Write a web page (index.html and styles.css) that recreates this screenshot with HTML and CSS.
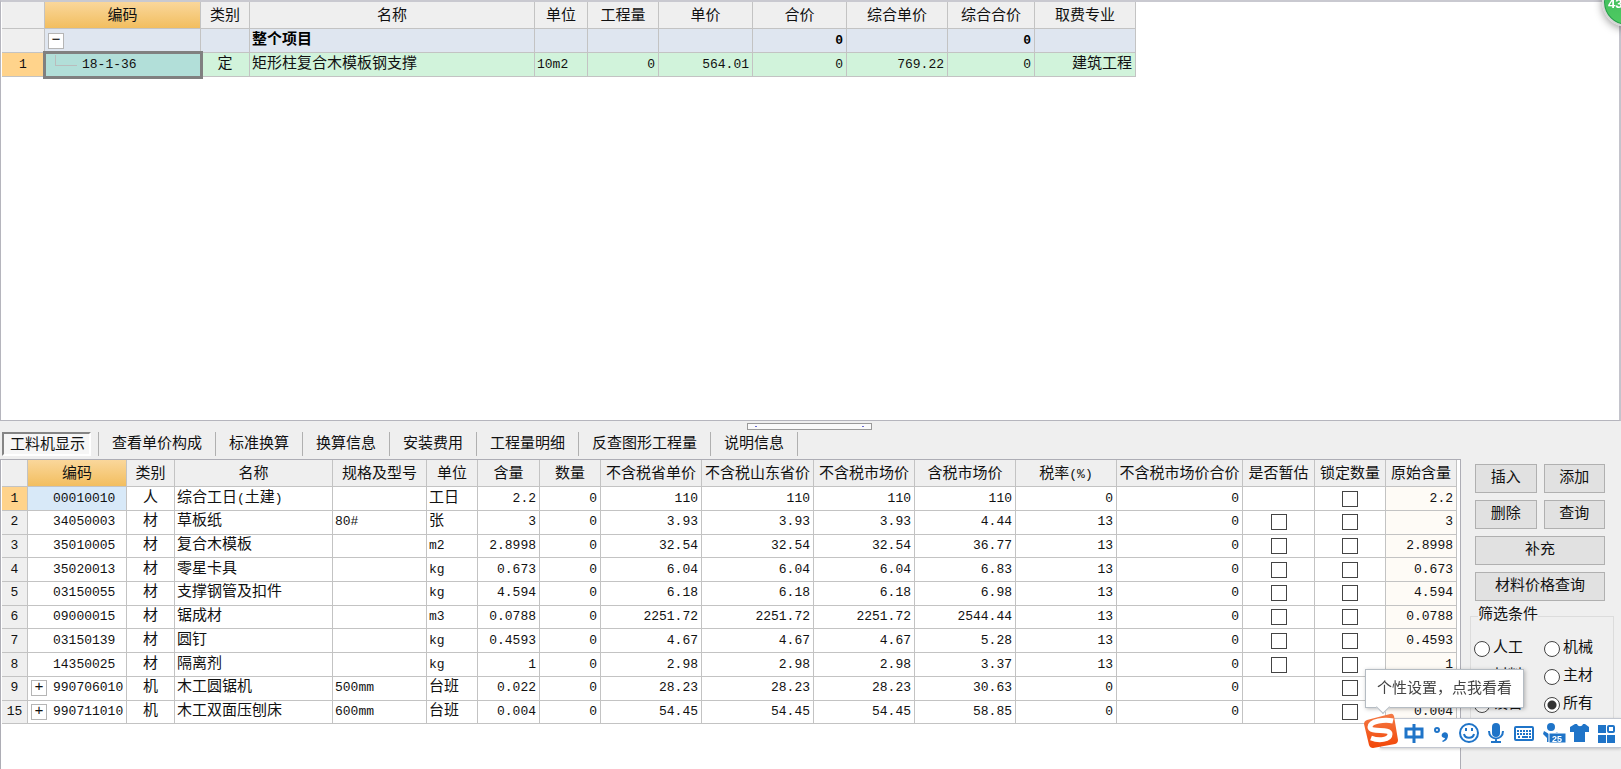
FILE: index.html
```
<!DOCTYPE html>
<html lang="zh-CN">
<head>
<meta charset="utf-8">
<title>工料机显示</title>
<link rel="stylesheet" href="styles.css">
</head>
<body>
<main class="app">
<section class="project">
<table class="grid project-grid">
<colgroup><col class="w43"><col class="w156"><col class="w49"><col class="w285"><col class="w53"><col class="w71"><col class="w94"><col class="w94"><col class="w101"><col class="w87"><col class="w101"></colgroup>
<thead><tr><th></th><th class="key">编码</th><th>类别</th><th>名称</th><th>单位</th><th>工程量</th><th>单价</th><th>合价</th><th>综合单价</th><th>综合合价</th><th>取费专业</th></tr></thead>
<tbody>
<tr class="total"><th></th><td class="toggle"><button class="expander" aria-label="折叠">−</button></td><td></td><td>整个项目</td><td></td><td></td><td></td><td class="num">0</td><td></td><td class="num">0</td><td></td></tr>
<tr class="item"><th class="current">1</th><td class="selected">18-1-36</td><td class="mid">定</td><td>矩形柱复合木模板钢支撑</td><td class="lat">10m2</td><td class="num">0</td><td class="num">564.01</td><td class="num">0</td><td class="num">769.22</td><td class="num">0</td><td class="end">建筑工程</td></tr>
</tbody>
</table>
</section>

<section class="detail">
<div class="splitter" role="separator"></div>
<nav class="tabs">
<button class="tab active">工料机显示</button>
<button class="tab">查看单价构成</button>
<button class="tab">标准换算</button>
<button class="tab">换算信息</button>
<button class="tab">安装费用</button>
<button class="tab">工程量明细</button>
<button class="tab">反查图形工程量</button>
<button class="tab">说明信息</button>
</nav>
<div class="work">
<div class="resources">
<table class="grid resource-grid">
<colgroup><col class="w26"><col class="w99"><col class="w48"><col class="w158"><col class="w94"><col class="w51"><col class="w62"><col class="w61"><col class="w101"><col class="w112"><col class="w101"><col class="w101"><col class="w101"><col class="w126"><col class="w72"><col class="w71"><col class="w71"></colgroup>
<thead><tr><th></th><th class="key">编码</th><th>类别</th><th>名称</th><th>规格及型号</th><th>单位</th><th>含量</th><th>数量</th><th>不含税省单价</th><th>不含税山东省价</th><th>不含税市场价</th><th>含税市场价</th><th>税率<span class="small">(%)</span></th><th>不含税市场价合价</th><th>是否暂估</th><th>锁定数量</th><th>原始含量</th></tr></thead>
<tbody>
<tr><th class="current">1</th><td class="code focus">00010010</td><td class="mid">人</td><td>综合工日<span class="small">(</span>土建<span class="small">)</span></td><td></td><td>工日</td><td class="num">2.2</td><td class="num">0</td><td class="num">110</td><td class="num">110</td><td class="num">110</td><td class="num">110</td><td class="num">0</td><td class="num">0</td><td></td><td class="mid"><input type="checkbox" aria-label="锁定数量"></td><td class="num origin">2.2</td></tr>
<tr><th>2</th><td class="code">34050003</td><td class="mid">材</td><td>草板纸</td><td class="lat">80#</td><td>张</td><td class="num">3</td><td class="num">0</td><td class="num">3.93</td><td class="num">3.93</td><td class="num">3.93</td><td class="num">4.44</td><td class="num">13</td><td class="num">0</td><td class="mid"><input type="checkbox" aria-label="是否暂估"></td><td class="mid"><input type="checkbox" aria-label="锁定数量"></td><td class="num origin">3</td></tr>
<tr><th>3</th><td class="code">35010005</td><td class="mid">材</td><td>复合木模板</td><td></td><td class="lat">m2</td><td class="num">2.8998</td><td class="num">0</td><td class="num">32.54</td><td class="num">32.54</td><td class="num">32.54</td><td class="num">36.77</td><td class="num">13</td><td class="num">0</td><td class="mid"><input type="checkbox" aria-label="是否暂估"></td><td class="mid"><input type="checkbox" aria-label="锁定数量"></td><td class="num origin">2.8998</td></tr>
<tr><th>4</th><td class="code">35020013</td><td class="mid">材</td><td>零星卡具</td><td></td><td class="lat">kg</td><td class="num">0.673</td><td class="num">0</td><td class="num">6.04</td><td class="num">6.04</td><td class="num">6.04</td><td class="num">6.83</td><td class="num">13</td><td class="num">0</td><td class="mid"><input type="checkbox" aria-label="是否暂估"></td><td class="mid"><input type="checkbox" aria-label="锁定数量"></td><td class="num origin">0.673</td></tr>
<tr><th>5</th><td class="code">03150055</td><td class="mid">材</td><td>支撑钢管及扣件</td><td></td><td class="lat">kg</td><td class="num">4.594</td><td class="num">0</td><td class="num">6.18</td><td class="num">6.18</td><td class="num">6.18</td><td class="num">6.98</td><td class="num">13</td><td class="num">0</td><td class="mid"><input type="checkbox" aria-label="是否暂估"></td><td class="mid"><input type="checkbox" aria-label="锁定数量"></td><td class="num origin">4.594</td></tr>
<tr><th>6</th><td class="code">09000015</td><td class="mid">材</td><td>锯成材</td><td></td><td class="lat">m3</td><td class="num">0.0788</td><td class="num">0</td><td class="num">2251.72</td><td class="num">2251.72</td><td class="num">2251.72</td><td class="num">2544.44</td><td class="num">13</td><td class="num">0</td><td class="mid"><input type="checkbox" aria-label="是否暂估"></td><td class="mid"><input type="checkbox" aria-label="锁定数量"></td><td class="num origin">0.0788</td></tr>
<tr><th>7</th><td class="code">03150139</td><td class="mid">材</td><td>圆钉</td><td></td><td class="lat">kg</td><td class="num">0.4593</td><td class="num">0</td><td class="num">4.67</td><td class="num">4.67</td><td class="num">4.67</td><td class="num">5.28</td><td class="num">13</td><td class="num">0</td><td class="mid"><input type="checkbox" aria-label="是否暂估"></td><td class="mid"><input type="checkbox" aria-label="锁定数量"></td><td class="num origin">0.4593</td></tr>
<tr><th>8</th><td class="code">14350025</td><td class="mid">材</td><td>隔离剂</td><td></td><td class="lat">kg</td><td class="num">1</td><td class="num">0</td><td class="num">2.98</td><td class="num">2.98</td><td class="num">2.98</td><td class="num">3.37</td><td class="num">13</td><td class="num">0</td><td class="mid"><input type="checkbox" aria-label="是否暂估"></td><td class="mid"><input type="checkbox" aria-label="锁定数量"></td><td class="num origin">1</td></tr>
<tr><th>9</th><td class="parent"><div class="branch"><button class="expander" aria-label="展开">+</button>990706010</div></td><td class="mid">机</td><td>木工圆锯机</td><td class="lat">500mm</td><td>台班</td><td class="num">0.022</td><td class="num">0</td><td class="num">28.23</td><td class="num">28.23</td><td class="num">28.23</td><td class="num">30.63</td><td class="num">0</td><td class="num">0</td><td></td><td class="mid"><input type="checkbox" aria-label="锁定数量"></td><td class="num origin">0.022</td></tr>
<tr><th>15</th><td class="parent"><div class="branch"><button class="expander" aria-label="展开">+</button>990711010</div></td><td class="mid">机</td><td>木工双面压刨床</td><td class="lat">600mm</td><td>台班</td><td class="num">0.004</td><td class="num">0</td><td class="num">54.45</td><td class="num">54.45</td><td class="num">54.45</td><td class="num">58.85</td><td class="num">0</td><td class="num">0</td><td></td><td class="mid"><input type="checkbox" aria-label="锁定数量"></td><td class="num origin">0.004</td></tr>
</tbody>
</table>
</div>
<aside class="side">
<div class="actions">
<button class="action">插入</button>
<button class="action">添加</button>
<button class="action">删除</button>
<button class="action">查询</button>
<button class="action wide">补充</button>
<button class="action wide">材料价格查询</button>
</div>
<fieldset class="filter">
<legend>筛选条件</legend>
<div class="choices">
<label><input type="radio" name="kind">人工</label>
<label><input type="radio" name="kind">机械</label>
<label><input type="radio" name="kind">材料</label>
<label><input type="radio" name="kind">主材</label>
<label><input type="radio" name="kind">设备</label>
<label><input type="radio" name="kind" checked>所有</label>
</div>
</fieldset>
</aside>
</div>
</section>
</main>

<div class="badge">43</div>
<div class="tip" role="tooltip">个性设置，点我看看</div>
<div class="ime">
<svg width="229" height="30" viewBox="0 0 229 30" fill="none" stroke="#1f74c8" stroke-width="2">
<path d="M15 10h16v8H15zM23 5v19" stroke-width="3"/>
<circle cx="46" cy="11" r="2"/>
<path d="M52 14a3 3 0 0 1 5 2c0 4-2 6-5 7l-1-1c2-1 3-2 3-3-4 0-4-4-2-5z" fill="#1f74c8" stroke="none"/>
<circle cx="78" cy="14" r="9"/>
<path d="M75 9v3M81 9v3M73 15c1 5 9 5 10 0"/>
<rect x="101" y="4" width="8" height="14" rx="4" fill="#1f74c8" stroke="none"/>
<path d="M98 12c0 10 14 10 14 0M105 19v4M100 23h10"/>
<rect x="124" y="8" width="18" height="13" rx="1"/>
<path d="M126 12h14M126 15h14" stroke-dasharray="2 1"/><path d="M127 18h2M131 18h6M138 18h2"/>
<circle cx="160" cy="8" r="3" fill="#1f74c8"/>
<path d="M153 12l5 3h5l3-2 2 2v8h-12v-4l-4-4z" fill="#1f74c8" stroke="none"/>
<rect x="158" y="14" width="17" height="10" fill="#1f74c8" stroke="#fff" stroke-width="1"/>
<text class="ime-count" x="161" y="23">25</text>
<path d="M184 5h2c1 3 5 3 6 0h2l4 3v5h-4v10h-11V13h-4V8z" fill="#1f74c8" stroke="none"/>
<path d="M207 6h8v8h-8zM207 16h8v8h-8zM216 16h8v8h-8z" fill="#1f74c8" stroke="none"/>
<rect x="217" y="7" width="6" height="6" rx="1"/>
</svg>
</div>
<svg class="logo" width="36" height="36" viewBox="0 0 36 36">
<defs><linearGradient id="flame" x1="0" y1="0" x2="0" y2="1"><stop offset="0" stop-color="#f47a45"/><stop offset="1" stop-color="#f24708"/></linearGradient></defs>
<path d="M4 7L27 1q3-1 4 2l4 24q0 3-3 4L10 35q-3 0-4-3L1 11q0-3 3-4z" fill="url(#flame)"/>
<path d="M30 8C22 6 7 8 7 14c0 6 20 1 20 7 0 6-11 7-19 4" fill="none" stroke="#fff" stroke-width="5"/>
</svg>
</body>
</html>
```
FILE: styles.css
```
* { box-sizing: border-box; }

body {
  margin: 0;
  background: #efefef;
  color: #111;
  font: 15px/20px "Liberation Mono", "Noto Sans CJK SC", monospace;
  overflow: hidden;
}

button, input { font: inherit; color: inherit; margin: 0; padding: 0; }

.app { display: flex; flex-direction: column; height: 100vh; }

/* Upper panel */
.project {
  flex: 420 1 0;
  min-height: 0;
  overflow: hidden;
  background: #fff;
  border: 1px solid #b5b5bd;
  border-top: 2px solid #c9c9d0;
  border-right: 2px solid #c4c4cc;
  padding-left: 1px;
}

/* Shared data grid */
.grid { table-layout: fixed; border-collapse: separate; border-spacing: 0; }
.grid th, .grid td {
  padding: 0 2px;
  border-right: 1px solid #c3c3c3;
  border-bottom: 1px solid #c3c3c3;
  white-space: nowrap;
  overflow: hidden;
  text-align: left;
  font-weight: 400;
}
.grid th { background: #efefef; text-align: center; padding: 0; }
.grid thead th { height: 27px; padding-top: 4px; }
.grid thead .key { background: linear-gradient(#fad79b, #f2be5f); }
.grid tbody th, .grid .num, .grid .lat, .grid .code, .grid .parent, .grid .selected, .small { font-size: 13px; }
.grid .num, .grid .end { text-align: right; padding-right: 3px; }
.grid .mid { text-align: center; }
.grid .current { background: #ffd38b; }
.grid .code { padding-left: 25px; }
.grid .focus { background: #d8e9f8; }
.grid .origin { background: #fefbf6; }

.w26 { width: 26px; }
.w43 { width: 43px; }
.w48 { width: 48px; }
.w49 { width: 49px; }
.w51 { width: 51px; }
.w53 { width: 53px; }
.w61 { width: 61px; }
.w62 { width: 62px; }
.w71 { width: 71px; }
.w72 { width: 72px; }
.w87 { width: 87px; }
.w94 { width: 94px; }
.w99 { width: 99px; }
.w101 { width: 101px; }
.w112 { width: 112px; }
.w126 { width: 126px; }
.w156 { width: 156px; }
.w158 { width: 158px; }
.w285 { width: 285px; }

.project-grid { width: 1134px; }
.project-grid tbody td { height: 24px; }
.total td { background: #dfe6f0; font-weight: 700; color: #000; }
.grid .toggle { line-height: 0; padding-left: 3px; }
.item td { background: #d1f3db; }
.item .selected {
  position: relative;
  background: #b2dfd9;
  outline: 3px solid #808080;
  outline-offset: -1px;
  padding-left: 37px;
}
.item .selected::before {
  content: "";
  position: absolute;
  left: 10px;
  top: 2px;
  width: 21px;
  height: 10px;
  border: solid #b9bdbd;
  border-width: 0 0 1px 1px;
}

.expander {
  flex: none;
  width: 16px;
  height: 16px;
  border: 1px solid #b5b5b5;
  background: #fff;
  font-size: 15px;
  font-weight: 400;
  line-height: 14px;
  text-align: center;
}

/* Lower panel */
.detail { flex: 349 1 0; min-height: 0; display: flex; flex-direction: column; }
.splitter {
  width: 125px;
  height: 7px;
  margin: 2px 0 2px 747px;
  border: 1px solid #999;
  background:
    radial-gradient(circle, #6a6ad0 1px, transparent 1px) 4px 0 / 8px 5px no-repeat,
    radial-gradient(circle, #6a6ad0 1px, transparent 1px) 111px 0 / 8px 5px no-repeat,
    #fafafa;
}
.tabs { display: flex; height: 27px; padding-left: 2px; }
.tab {
  height: 24px;
  padding: 2px 13px 0;
  border: 0;
  border-right: 1px solid #b0b0b0;
  background: none;
  line-height: 22px;
  white-space: nowrap;
}
.tab.active {
  position: relative;
  width: 97px;
  padding: 3px 5px 0 0;
}
.tab.active::before {
  content: "";
  position: absolute;
  z-index: -1;
  inset: 0 7px 0 0;
  border: 2px solid;
  border-color: #858585 #fff #fff #858585;
  background: #f6f6f6;
}

.work { flex: 1; display: flex; min-height: 0; }
.resources {
  flex: 1;
  min-width: 0;
  overflow: hidden;
  background: #fff;
  border: 1px solid #adadb5;
  border-bottom: 0;
  padding: 0 0 0 1px;
}
.resource-grid { width: 1455px; height: 264px; }

input[type="checkbox"], input[type="radio"] {
  appearance: none;
  width: 16px;
  height: 16px;
  border: 1px solid #444;
  background: #fff;
}
input[type="checkbox"] { display: block; margin: 0 auto; }
input[type="radio"] { border-radius: 50%; flex: none; }
input[type="radio"]:checked { background: radial-gradient(circle, #333 4px, #fff 5px); }

.grid .parent { padding-left: 3px; }
.branch { display: flex; align-items: center; gap: 6px; }

/* Commands and filter */
.side { width: 160px; padding: 5px 7px 0 9px; }
.actions { display: grid; grid-template-columns: 1fr 1fr; gap: 7px; padding: 0 9px 0 5px; }
.action { height: 29px; padding-top: 1px; border: 1px solid #b0b0b0; background: #e1e1e1; }
.wide { grid-column: span 2; }
.filter { margin: 5px 0 0; padding: 13px 0 12px 3px; border: 1px solid #dcdcdc; min-width: 0; }
.filter legend { margin-left: 4px; padding: 0; }
.choices { display: grid; grid-template-columns: 70px 1fr; row-gap: 8px; }
.choices label { display: flex; align-items: center; gap: 3px; }

/* Floating widgets */
.badge {
  position: fixed;
  top: -23px;
  right: -31px;
  width: 50px;
  height: 50px;
  padding: 18px 0 0 4px;
  border: 2px solid #d5d5d5;
  border-radius: 50%;
  background: linear-gradient(#3cb85a, #4fcb62);
  box-shadow: inset 0 0 0 1px #249a4c, 0 2px 8px #0006;
  color: #fff;
  font: 700 13px/14px "Liberation Sans", sans-serif;
}
.tip {
  position: fixed;
  right: 97px;
  bottom: 61px;
  z-index: 3;
  padding: 10px 11px 7px;
  border: 1px solid #b5bcc3;
  background: #fff;
  box-shadow: 1px 1px 4px #0004;
  color: #444;
}
.tip::after {
  content: "";
  position: absolute;
  left: 12px;
  bottom: -5px;
  width: 9px;
  height: 9px;
  border: solid #b5bcc3;
  border-width: 0 1px 1px 0;
  background: #fff;
  transform: rotate(45deg);
}
.ime {
  position: fixed;
  right: 0;
  bottom: 21px;
  width: 241px;
  height: 30px;
  padding-left: 10px;
  border: 1px solid #c3c7d0;
  border-right: 0;
  background: #fff;
  box-shadow: 0 1px 3px #0003;
}
.ime svg { display: block; }
.ime-count { fill: #fff; stroke: none; font: 700 9px "Liberation Sans", sans-serif; }
.logo { position: fixed; right: 222px; bottom: 20px; }
```
